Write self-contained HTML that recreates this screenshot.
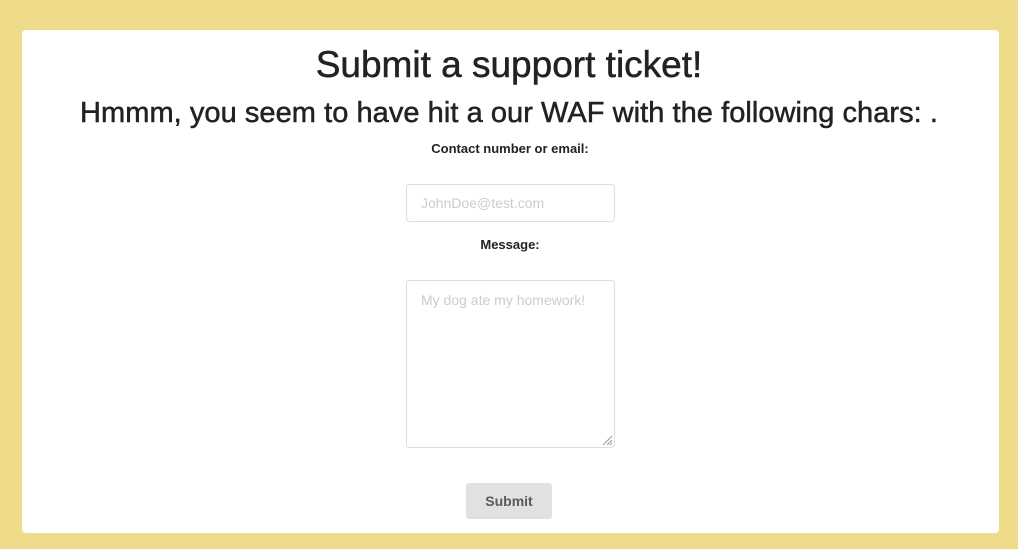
<!DOCTYPE html>
<html><head><style>
html,body{margin:0;padding:0;width:1018px;height:549px;overflow:hidden;background:#efdc8b;font-family:"Liberation Sans",sans-serif;color:#222}
.card{position:absolute;left:22px;top:30px;width:977px;height:503px;background:#fff;border-radius:4px}
h1{position:absolute;left:0;right:0;top:44px;margin:0;text-align:center;font-size:37px;font-weight:normal;color:#222;-webkit-text-stroke:0.5px #222}
h2{position:absolute;left:0;right:0;top:97px;margin:0;text-align:center;font-size:29px;font-weight:normal;color:#222;-webkit-text-stroke:0.5px #222;letter-spacing:0.05px}
.lbl{position:absolute;left:0;right:0;text-align:center;font-size:13px;font-weight:bold;padding-left:2px}
.inp{position:absolute;left:406px;width:209px;border:1px solid #ddd;border-radius:4px;background:#fff;color:#ccc;font-size:14px;box-sizing:border-box;padding-left:14px}
.btn{position:absolute;left:466px;top:483px;width:86px;height:36px;background:#e0e1e2;border-radius:3px;color:#5a5a5a;font-weight:bold;font-size:14px;text-align:center;line-height:36px}
</style></head><body>
<div class="card"></div>
<h1>Submit a support ticket!</h1>
<h2>Hmmm, you seem to have hit a our WAF with the following chars: .</h2>
<div class="lbl" style="top:141px">Contact number or email:</div>
<div class="inp" style="top:184px;height:38px;line-height:36px">JohnDoe@test.com</div>
<div class="lbl" style="top:237px">Message:</div>
<div class="inp" style="top:280px;height:168px;padding-top:11px">My dog ate my homework!
<svg style="position:absolute;right:1px;bottom:1px" width="12" height="12"><path d="M11 2L2 11M11 6L6 11M11 9L9 11" stroke="#999" stroke-width="1"/></svg></div>
<div class="btn">Submit</div>
</body></html>
